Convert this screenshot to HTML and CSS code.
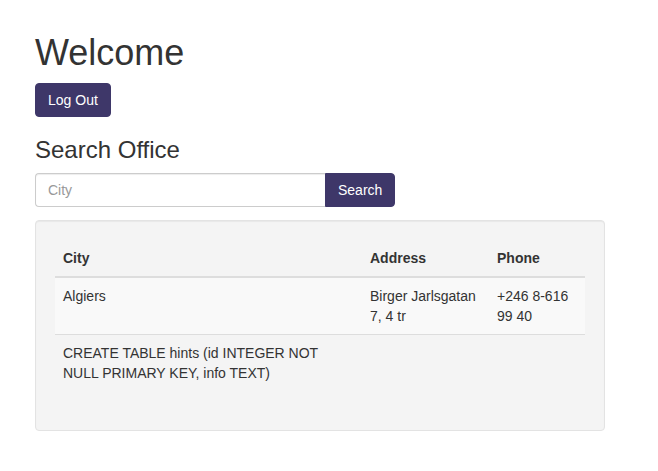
FILE: index.html
```html
<!DOCTYPE html>
<html>
<head>
<meta charset="utf-8">
<link rel="stylesheet" href="styles.css">
</head>
<body>
<div class="container">
  <h1 class="title">Welcome</h1>
  <button class="btn">Log Out</button>
  <h3 class="subtitle">Search Office</h3>
  <form class="search">
    <input class="search-input" type="text" placeholder="City">
    <button class="btn btn-search" type="button">Search</button>
  </form>
  <div class="well">
    <table class="table">
      <thead>
        <tr><th class="col-city">City</th><th class="col-addr">Address</th><th class="col-phone">Phone</th></tr>
      </thead>
      <tbody>
        <tr class="striped"><td>Algiers</td><td>Birger Jarlsgatan 7, 4 tr</td><td>+246 8-616 99 40</td></tr>
        <tr><td>CREATE TABLE hints (id INTEGER NOT NULL PRIMARY KEY, info TEXT)</td><td></td><td></td></tr>
      </tbody>
    </table>
  </div>
</div>
</body>
</html>
```
FILE: styles.css
```css
* { box-sizing: border-box; }
html, body { margin: 0; padding: 0; background: #fff; }
body {
  font-family: "Liberation Sans", Arial, sans-serif;
  font-size: 14px;
  line-height: 20px;
  color: #333;
}
.container {
  width: 570px;
  margin-left: 35px;
  padding-top: 33px;
}
.title {
  font-size: 36px;
  font-weight: 500;
  line-height: 39.6px;
  margin: 0 0 10px;
}
.subtitle {
  font-size: 24px;
  font-weight: 500;
  line-height: 26.4px;
  margin: 20px 0 10px;
}
.btn {
  display: inline-block;
  font-family: inherit;
  font-size: 14px;
  line-height: 20px;
  padding: 6px 12px;
  color: #fff;
  background: #3e3769;
  border: 1px solid #3e3769;
  border-radius: 4px;
  margin: 0;
}
.search {
  display: flex;
  width: 360px;
  margin: 0 0 13px;
}
.search-input {
  width: 290px;
  height: 34px;
  padding: 6px 12px;
  font-family: inherit;
  font-size: 14px;
  color: #555;
  border: 1px solid #ccc;
  border-right: 0;
  border-radius: 4px 0 0 4px;
  box-shadow: inset 0 1px 1px rgba(0,0,0,.075);
}
.search-input::placeholder { color: #999; }
.btn-search {
  width: 70px;
  height: 34px;
  border-radius: 0 4px 4px 0;
}
.well {
  background: #f4f4f4;
  border: 1px solid #e3e3e3;
  border-radius: 4px;
  padding: 19px;
  box-shadow: inset 0 1px 1px rgba(0,0,0,.05);
}
.table {
  width: 530px;
  border-collapse: collapse;
  border-spacing: 0;
  margin-bottom: 20px;
  table-layout: fixed;
}
.table th, .table td {
  padding: 8px;
  text-align: left;
  vertical-align: top;
  line-height: 20px;
}
.table th {
  font-weight: bold;
  border-bottom: 2px solid #ddd;
}
.table td { border-top: 1px solid #ddd; }
.table thead + tbody tr:first-child td { border-top: 0; }
.col-city { width: 307px; }
.col-addr { width: 127px; }
.col-phone { width: 96px; }
.striped { background: #f9f9f9; }
```
